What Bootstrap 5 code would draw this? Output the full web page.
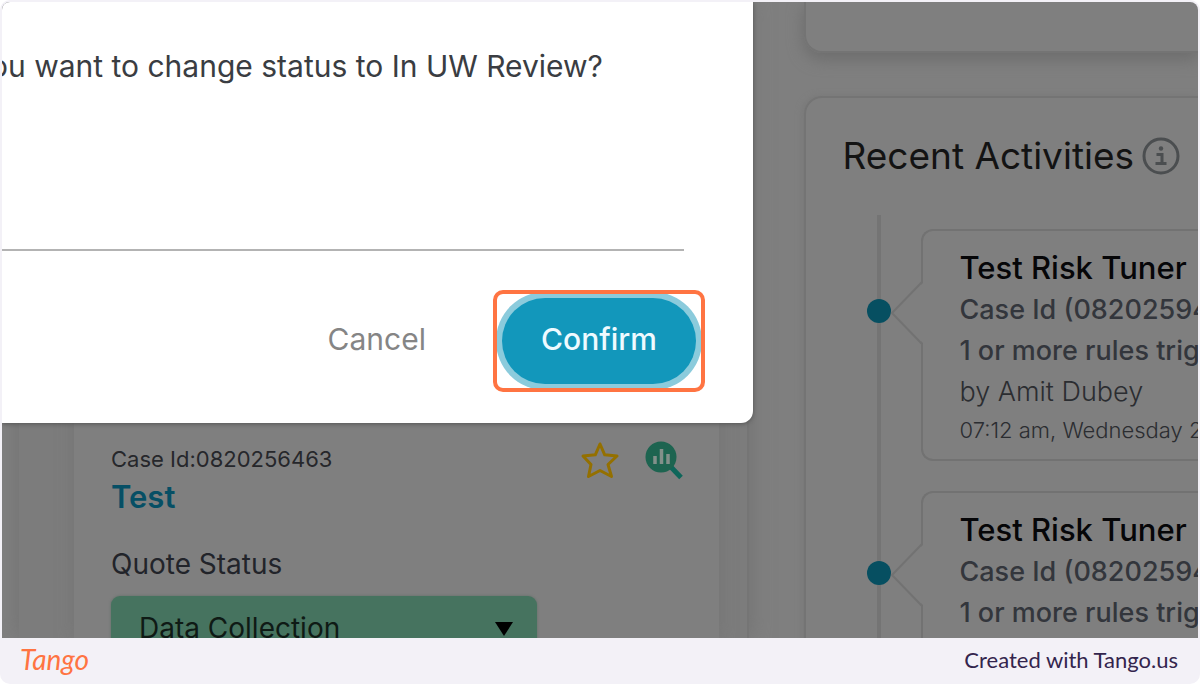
<!DOCTYPE html>
<html lang="en">
<head>
<meta charset="utf-8">
<meta name="viewport" content="width=device-width, initial-scale=1">
<title>Change case status</title>
<link href="https://cdn.jsdelivr.net/npm/bootstrap@5.3.0/dist/css/bootstrap.min.css" rel="stylesheet">
<style>
  body { font-family: Inter, "Liberation Sans", sans-serif; background: #fff; }
  .tour { background: #f3f1f7; padding: 2px 2px 0; border-radius: 10px; }
  .stage { background: #7f7f7f; border-radius: 8px 8px 0 0; min-height: 0; }

  /* left: case panel behind the dialog */
  .case-side { width: 63%; padding-left: 17px; }
  .case-panel { background: #7c7c7c; width: 730px; max-width: 100%; padding: 0 28px 0 55px; border-right: 2px solid #757575; box-shadow: 0 0 20px #727272; }
  .case-card { background: #7f7f7f; box-shadow: 0 0 14px #757575; padding: 438px 35px 0 37px; height: 100%; }
  .fs-case { font-size: 22px; line-height: 38px; color: #26272b; }
  .case-name { font-size: 31px; line-height: 38px; font-weight: 600; color: #064f65; text-decoration: none; }
  .fs-label { font-size: 28px; line-height: 32px; margin-top: 32px; color: #22242a; }
  .status-box { width: 426px; max-width: 100%; }
  .status-select { appearance: none; width: 100%; height: 64px; border: 0; border-radius: 9px; background: #46735f; color: #0f1a15; padding: 0 28px; font-size: 28px; box-shadow: 0 0 3px #5f6f68; }
  .status-arrow { right: 24px; top: 26px; pointer-events: none; }

  /* right: activity feed */
  .feed-side { padding-left: 49px; width: 37%; }
  .feed-card { border: 2px solid #747474; border-right: 0; }
  .feed-top { height: 51px; border-top: 0; border-radius: 0 0 0 18px; box-shadow: 0 6px 16px #6c6c6c; }
  .feed-main { margin-top: 43px; border-radius: 18px 0 0 0; padding: 35px 0 0 36px; height: 640px; box-shadow: -2px 0 6px #797979; }
  .feed-title { font-size: 37px; line-height: 46px; font-weight: 400; color: #131313; }
  .feed-line { margin: 36px 0 0 35px; border-left: 4px solid #747474; padding: 14px 0 0 40px; height: 520px; }
  .feed-item { border: 2px solid #727272; border-right: 0; border-radius: 12px 0 0 12px; height: 232px; padding: 16px 0 0 36px; margin-bottom: 30px; }
  .feed-dot { width: 24px; height: 24px; border-radius: 50%; background: #064f61; left: -56px; top: 68px; }
  .feed-notch { left: -34px; top: 48px; }
  .item-name { font-size: 31px; line-height: 42px; font-weight: 500; color: #060608; }
  .item-text { font-size: 27px; line-height: 41px; font-weight: 500; color: #33363c; }
  .item-by { font-size: 27px; line-height: 41px; font-weight: 300; color: #2b2d31; }
  .item-date { font-size: 22px; line-height: 37px; font-weight: 300; color: #2b2d31; }

  /* dialog */
  .ask { width: 751px; max-width: 100%; border-radius: 0 0 12px 0; padding: 44px 57px 39px 0; box-shadow: 0 1px 4px #555; }
  .ask-text { font-size: 30px; line-height: 40px; color: #3a3d42; margin-left: -12px; }
  .ask-rule { margin: 163px 12px 0 0; border-top: 2px solid #b3b3b3; opacity: 1; }
  .ask-actions { padding-top: 47px; gap: 76px; }
  .btn-plain { border: 0; background: none; padding: 0 0 4px; font-size: 30px; line-height: 40px; color: #858585; }
  .btn-ok, .btn-ok:hover { border: 0; border-radius: 43px; background: #1297bb; color: #eefaff; width: 194px; height: 86px; padding: 0 0 4px; font-size: 30px; font-weight: 500; box-shadow: 0 0 0 6px #8bcbdc; }
  .spot { inset: -8px -9px; border: 4px solid #ff7442; border-radius: 10px; pointer-events: none; }

  .credit { height: 46px; padding: 0 20px 0 18px; }
  .credit a { text-decoration: none; line-height: 40px; }
  .brand-word { font-family: Lato, sans-serif; font-style: italic; font-size: 28px; color: #ff7442; padding-bottom: 4px; }
  .made-with { font-family: Lato, sans-serif; font-size: 22px; color: #33254d; padding-bottom: 2px; }
</style>
</head>
<body>
<div class="tour vh-100 d-flex flex-column overflow-hidden">
  <main class="stage flex-fill d-flex position-relative overflow-hidden">
    <section class="case-side flex-shrink-0 d-flex">
      <div class="case-panel">
        <div class="case-card">
          <div class="d-flex justify-content-between align-items-start">
            <div>
              <div class="fs-case">Case Id:0820256463</div>
              <a class="case-name d-block" href="#">Test</a>
            </div>
            <div class="d-flex gap-4">
              <svg width="40" height="40" viewBox="0 0 40 40" fill="none" stroke="#947000" stroke-width="3" stroke-linejoin="round" aria-label="Favourite"><path d="M20 4 24.700 14.800 37 16 28 24.500 31.500 36.500 20 30.500 8.500 36.500 11 24.500 3 16 15.300 14.800Z"/></svg>
              <svg width="40" height="40" viewBox="0 0 40 40" aria-label="Analyse"><path d="M26 26 37 37.500" stroke="#0e665a" stroke-width="5"/><circle cx="17" cy="17" r="15.500" fill="#1d6450"/><path d="M11 16v8M17.500 9v15M24 14v10" stroke="#82908a" stroke-width="3.500"/></svg>
            </div>
          </div>
          <label class="fs-label d-block" for="status">Quote Status</label>
          <div class="status-box position-relative mt-3">
            <select id="status" class="status-select"><option>Data Collection</option></select>
            <svg class="status-arrow position-absolute" width="18" height="14" viewBox="0 0 18 14"><path d="M0 0h18L9 14Z" fill="#000"/></svg>
          </div>
        </div>
      </div>
    </section>

    <aside class="feed-side flex-fill">
      <div class="feed-card feed-top"></div>
      <div class="feed-card feed-main">
        <div class="d-flex align-items-center gap-2">
          <h1 class="feed-title text-nowrap mb-0">Recent Activities</h1>
          <svg width="38" height="38" viewBox="0 0 38 38" fill="none" stroke="#4b4e50" aria-label="Info"><circle cx="19" cy="19" r="17" stroke-width="3"/><path d="M14.500 17.500H20V26M13.500 26.500h11" stroke-width="3"/><circle cx="19" cy="11.500" r="2.200" fill="#4b4e50" stroke="none"/></svg>
        </div>
        <div class="feed-line text-nowrap">
          <article class="feed-item position-relative">
            <span class="feed-dot position-absolute"></span>
            <svg class="feed-notch position-absolute" width="36" height="68" viewBox="0 0 36 68"><path d="M35 3 3 34 35 65Z" fill="#7f7f7f"/><path d="M33 3 3 34 33 65" fill="none" stroke="#727272" stroke-width="2"/></svg>
            <div class="item-name">Test Risk Tuner</div>
            <div class="item-text">Case Id (08202594</div>
            <div class="item-text">1 or more rules trig</div>
            <div class="item-by">by Amit Dubey</div>
            <div class="item-date">07:12 am, Wednesday 2</div>
          </article>
          <article class="feed-item position-relative">
            <span class="feed-dot position-absolute"></span>
            <svg class="feed-notch position-absolute" width="36" height="68" viewBox="0 0 36 68"><path d="M35 3 3 34 35 65Z" fill="#7f7f7f"/><path d="M33 3 3 34 33 65" fill="none" stroke="#727272" stroke-width="2"/></svg>
            <div class="item-name">Test Risk Tuner</div>
            <div class="item-text">Case Id (08202594</div>
            <div class="item-text">1 or more rules trig</div>
          </article>
        </div>
      </div>
    </aside>

    <div class="ask bg-white position-absolute top-0 start-0" role="dialog" aria-label="Change status">
      <p class="ask-text text-nowrap mb-0">ou want to change status to In UW Review?</p>
      <hr class="ask-rule">
      <div class="ask-actions d-flex justify-content-end align-items-center">
        <button type="button" class="btn-plain">Cancel</button>
        <div class="position-relative">
          <button type="button" class="btn btn-ok">Confirm</button>
          <div class="spot position-absolute"></div>
        </div>
      </div>
    </div>
  </main>
  <footer class="credit d-flex justify-content-between align-items-center flex-shrink-0">
    <a class="brand-word" href="#">Tango</a>
    <a class="made-with" href="#">Created with Tango.us</a>
  </footer>
</div>
<script src="https://cdn.jsdelivr.net/npm/bootstrap@5.3.0/dist/js/bootstrap.bundle.min.js"></script>
</body>
</html>
